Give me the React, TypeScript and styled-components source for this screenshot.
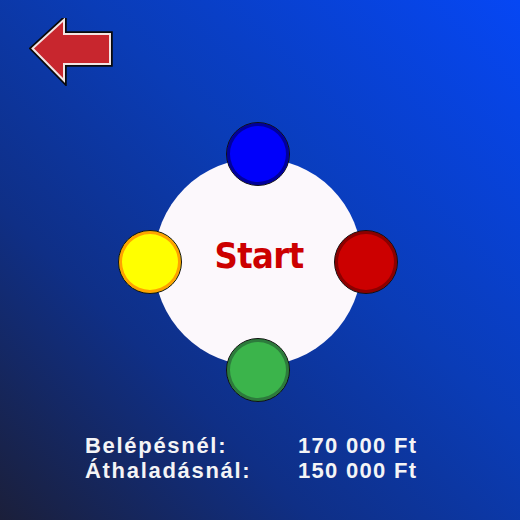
import React from 'react';
import styled, { createGlobalStyle } from 'styled-components';

const GlobalStyle = createGlobalStyle`
  html, body {
    margin: 0;
    padding: 0;
  }
  body {
    font-family: 'Liberation Sans', Arial, sans-serif;
  }
`;

const Screen = styled.div`
  width: 520px;
  height: 520px;
  display: flex;
  flex-direction: column;
  overflow: hidden;
  background: linear-gradient(
    to top right,
    #1b1f3a 0%,
    #0f2f86 30%,
    #0a3cb6 58%,
    #0647f4 100%
  );
`;

const Header = styled.div`
  padding: 18px 0 0 29px;
  height: 68px;
`;

const BackButton = styled.button`
  border: 0;
  padding: 0;
  background: none;
  cursor: pointer;
  width: 86px;
  height: 68px;
  display: block;
`;

const Board = styled.div`
  position: relative;
  width: 280px;
  height: 280px;
  margin: 36px 0 0 118px;
  display: grid;
  place-items: center;
`;

const Disc = styled.div`
  width: 208px;
  height: 208px;
  border-radius: 50%;
  background: #fcf8fc;
  display: flex;
  align-items: center;
  justify-content: center;
`;

const StartLabel = styled.span`
  font-family: 'DejaVu Sans Condensed', 'DejaVu Sans', sans-serif;
  font-weight: bold;
  font-size: 36px;
  letter-spacing: -0.6px;
  color: #cc0000;
  margin: 0 0 13px 2px;
`;

type Side = 'top' | 'left' | 'right' | 'bottom';

const spots: Record<Side, string> = {
  top: 'top: 0; left: 108px;',
  left: 'top: 108px; left: 0;',
  right: 'top: 108px; right: 0;',
  bottom: 'bottom: 0; left: 108px;',
};

const Token = styled.div<{ $fill: string; $ring: string; $side: Side }>`
  position: absolute;
  ${p => spots[p.$side]}
  width: 64px;
  height: 64px;
  box-sizing: border-box;
  border-radius: 50%;
  border: 1.5px solid #111;
  background: ${p => p.$fill};
  box-shadow: inset 0 0 0 3px ${p => p.$ring};
`;

const Prices = styled.div`
  margin: 31px 0 0 85px;
  display: grid;
  grid-template-columns: 213px auto;
  color: #f4f4f6;
  font-size: 22px;
  font-weight: bold;
  line-height: 25px;
`;

const PriceLabel = styled.span`
  letter-spacing: 1.7px;
`;

const PriceValue = styled.span`
  letter-spacing: 1.3px;
`;

const arrowPoints = '5,30.5 34,4 34,17 80,17 80,45 34,45 34,60';

const BackArrow = () => (
  <svg width="86" height="68" viewBox="0 0 86 68">
    <polygon points={arrowPoints} fill="none" stroke="#0a0a0a" strokeWidth="7.5" strokeLinejoin="miter" />
    <polygon points={arrowPoints} fill="none" stroke="#f2e4e4" strokeWidth="4" strokeLinejoin="miter" />
    <polygon points={arrowPoints} fill="#c8262e" />
  </svg>
);

export default function App() {
  return (
    <>
      <GlobalStyle />
      <Screen>
        <Header>
          <BackButton aria-label="Vissza">
            <BackArrow />
          </BackButton>
        </Header>
        <Board>
          <Disc>
            <StartLabel>Start</StartLabel>
          </Disc>
          <Token $side="top" $fill="#0000fb" $ring="#00009c" />
          <Token $side="left" $fill="#ffff00" $ring="#ffa200" />
          <Token $side="right" $fill="#cc0000" $ring="#8c0000" />
          <Token $side="bottom" $fill="#3bb44b" $ring="#2d7a3c" />
        </Board>
        <Prices>
          <PriceLabel>Belépésnél:</PriceLabel>
          <PriceValue>170 000 Ft</PriceValue>
          <PriceLabel>Áthaladásnál:</PriceLabel>
          <PriceValue>150 000 Ft</PriceValue>
        </Prices>
      </Screen>
    </>
  );
}
